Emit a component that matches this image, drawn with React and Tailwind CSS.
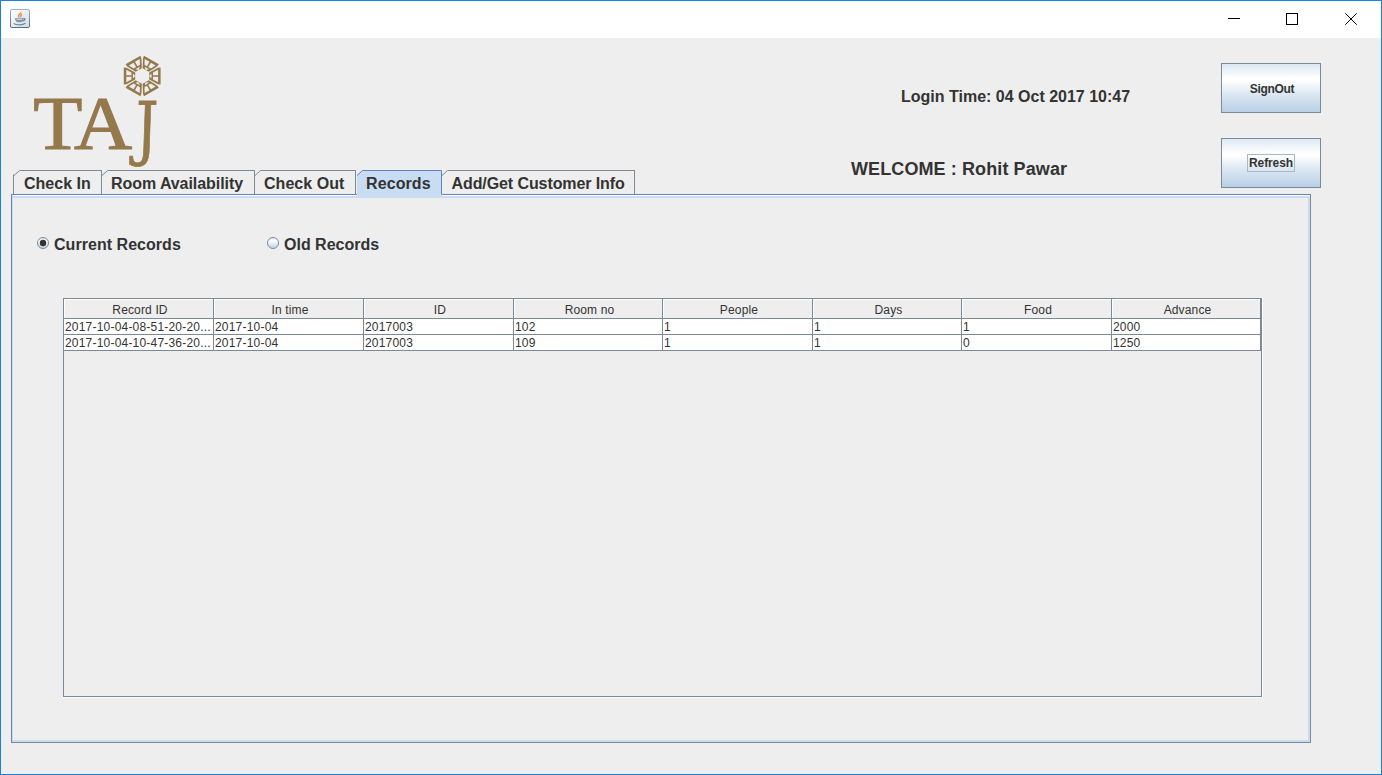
import React from "react";

const columns = [
  { name: "Record ID", w: "w-[150px]" },
  { name: "In time", w: "w-[150px]" },
  { name: "ID", w: "w-[150px]" },
  { name: "Room no", w: "w-[149px]" },
  { name: "People", w: "w-[150px]" },
  { name: "Days", w: "w-[149px]" },
  { name: "Food", w: "w-[150px]" },
  { name: "Advance", w: "w-[149px]" },
];

const rows = [
  ["2017-10-04-08-51-20-20...", "2017-10-04", "2017003", "102", "1", "1", "1", "2000"],
  ["2017-10-04-10-47-36-20...", "2017-10-04", "2017003", "109", "1", "1", "0", "1250"],
];

function JavaIcon() {
  return (
    <svg width="20" height="19" viewBox="0 0 20 19">
      <defs>
        <linearGradient id="cup" x1="0" y1="0" x2="1" y2="1">
          <stop offset="0" stopColor="#ffffff" />
          <stop offset="1" stopColor="#d3dae0" />
        </linearGradient>
        <linearGradient id="frame" x1="0" y1="0" x2="0" y2="1">
          <stop offset="0" stopColor="#9fb4c6" />
          <stop offset="1" stopColor="#536d84" />
        </linearGradient>
      </defs>
      <rect x="0.5" y="0.5" width="19" height="18" rx="1.5" fill="url(#cup)" stroke="url(#frame)" />
      <path d="M10.8 3.200c.6 2-4.200 2.400-1.600 5.200M12.200 5.400c-2.400 1-1.600 1.600-1.200 3" fill="none" stroke="#ee8d4a" strokeWidth="1.500" />
      <path d="M5 9h8.500c0 2-1 4-2.500 4.300H7.500C6 13 5 11 5 9z" fill="#7f97ae" />
      <path d="M6.500 10.200h5.500" stroke="#e4eaef" />
      <path d="M13.500 9.500c2.400-.2 1.600 2.200-1 2.500M3.500 14.500c3 1.800 9 1.800 12-.3" fill="none" stroke="#6c88a3" strokeWidth="1.300" />
    </svg>
  );
}

function TajLogo() {
  return (
    <svg width="134" height="116" viewBox="30 54 134 116" fill="#94794d" className="font-normal">
      <g transform="translate(142.200 76)">
        {[0, 60, 120, 180, 240, 300].map((a) => (
          <path
            key={a}
            transform={`rotate(${a})`}
            fillRule="evenodd"
            d="M-18.400-8.600L-15.800-8.200L-7-3.600V3.600L-15.800 8.200L-18.400 8.600ZM-15.900-6.300V-.8H-10.800V-3.600ZM-15.900 .8V6.300L-10.800 3.600V.8ZM-9.300-2.500V2.500L-7 0Z"
          />
        ))}
      </g>
      <text transform="translate(34 149.400) scale(1.060 1)" x="-0.700 37.700" fontSize="76" fontFamily="'Liberation Serif', serif" stroke="#94794d" strokeWidth="1.100">TA</text>
      <text transform="translate(134.500 151.500) skewX(-2) scale(.8 1)" fontSize="70" fontFamily="'DejaVu Serif', serif" stroke="#94794d" strokeWidth=".8">J</text>
    </svg>
  );
}

function Tab({ label, width, pad, track }) {
  return (
    <div className={`relative h-6 ${width}`}>
      <svg className="absolute inset-0 h-full w-full" fill="none" stroke="#7a8a99">
        <path d="M0 5.500L5.500 .5H400" />
      </svg>
      <span className={`relative block h-6 border-r border-[#7a8a99] leading-[27px] ${pad} ${track}`}>{label}</span>
    </div>
  );
}

function Radio({ label, on, track }) {
  return (
    <label className="flex w-[230px] items-center">
      <svg width="12" height="12" className="mr-[5px] -mt-[4px]">
        <defs>
          <linearGradient id="radio" x1="0" y1="0" x2="0" y2="1">
            <stop offset="0" stopColor="#dde8f3" />
            <stop offset=".3" stopColor="#fff" />
            <stop offset="1" stopColor="#b8cfe5" />
          </linearGradient>
        </defs>
        <circle cx="6" cy="6" r="5.500" fill="url(#radio)" stroke="#7a8a99" />
        {on && <circle cx="6" cy="6" r="3.200" fill="#333" />}
      </svg>
      <span className={track}>{label}</span>
    </label>
  );
}

const buttonStyle =
  "flex h-[50px] w-[100px] items-center justify-center border border-[#7a8a99] bg-[linear-gradient(180deg,#dde8f3_0%,#ffffff_30%,#ffffff_34%,#dde8f3_62%,#b8cfe5_100%)] text-[12px] font-bold";

export default function App() {
  return (
    <div className="flex h-[775px] w-[1382px] flex-col border border-[#1883d7] bg-[#eeeeee] font-['Liberation_Sans',sans-serif] text-[#333333]">
      <header className="flex h-[37px] shrink-0 justify-between bg-white">
        <div className="pt-2 pl-[9px]">
          <JavaIcon />
        </div>
        <svg className="mr-[19px]" width="140" height="37" viewBox="1222 1 140 37" stroke="#000" fill="none">
          <path d="M1228 18.500h12" />
          <rect x="1286.500" y="13.500" width="11" height="11" />
          <path d="M1345.300 13.300l11.400 11.400M1356.700 13.300l-11.400 11.400" />
        </svg>
      </header>

      <div className="flex h-[156px] shrink-0 font-bold">
        <div className="flex w-[850px] flex-col">
          <div className="h-[132px] pt-4 pl-[29px]">
            <TajLogo />
          </div>
          <nav className="flex pl-3 text-[16px] whitespace-nowrap">
            <div className="flex border-l border-[#7a8a99] [clip-path:polygon(5px_0,100%_0,100%_100%,0_100%,0_5px)]">
              <Tab label="Check In" width="w-[88px]" pad="pl-[10px]" track="" />
            </div>
            <Tab label="Room Availability" width="w-[153px]" pad="pl-[9px]" track="tracking-[-0.06px]" />
            <Tab label="Check Out" width="w-[101px]" pad="pl-[9px]" track="tracking-[0.04px]" />
            <div className="relative z-10 -mb-[3px] ml-px h-[27px] w-[85px]">
              <svg className="absolute inset-0 h-full w-full">
                <path d="M0 5L5 0H85V24H85V27H0Z" fill="#c8ddf2" />
                <path d="M0 5.500L5.500 .5H84.500V24.500" fill="none" stroke="#6382bf" />
              </svg>
              <span className="relative block pl-[9px] leading-[27px] tracking-[0.1px]">Records</span>
            </div>
            <Tab label="Add/Get Customer Info" width="w-[193px]" pad="pl-[9.500px]" track="tracking-[-0.09px]" />
          </nav>
        </div>
        <div className="flex w-[370px] flex-col whitespace-nowrap">
          <div className="pt-[47px] pl-[50px] text-[16px] leading-6">Login Time: 04 Oct 2017 10:47</div>
          <div className="pt-12 text-[18px] leading-6 tracking-[0.1px]">WELCOME : Rohit Pawar</div>
        </div>
        <div className="flex flex-col gap-[25px] pt-[25px]">
          <button className={buttonStyle}>
            <span className="pt-px pl-[2px] tracking-[-0.3px]">SignOut</span>
          </button>
          <button className={buttonStyle}>
            <span className="border border-[#a3b8cc] px-px leading-4 tracking-[-0.1px]">Refresh</span>
          </button>
        </div>
      </div>

      <main className="ml-[10px] h-[549px] w-[1300px] border border-t-[#6382bf] border-r-[#7a8a99] border-b-[#7a8a99] border-l-[#6382bf]">
        <div className="h-full border-t border-white">
          <div className="h-full border-2 border-l border-[#c8ddf2]">
            <div className="flex pt-[35px] pl-6 text-[16px] leading-6 font-bold">
              <Radio label="Current Records" on track="tracking-[0.04px]" />
              <Radio label="Old Records" track="" />
            </div>
            <div className="mt-[41px] ml-[50px] h-[400px] w-[1200px] border-r border-b border-white">
              <div className="h-[399px] border border-[#7a8a99] text-[12px]">
                <div className="flex h-5 w-[1197px] border-b border-[#7a8a99]">
                  {columns.map((c) => (
                    <div key={c.name} className={`h-[19px] shrink-0 border-r border-[#7a8a99] ${c.w}`}>
                      <div className="h-full border-t border-l border-white pl-[2px] text-center leading-5 tracking-[0.15px]">{c.name}</div>
                    </div>
                  ))}
                </div>
                {rows.map((r) => (
                  <div key={r[0]} className="flex h-4 w-[1197px] border-b border-[#7a8a99] bg-white">
                    {r.map((v, i) => (
                      <div key={i} className={`shrink-0 border-r border-[#7a8a99] pl-px leading-4 tracking-[0.2px] whitespace-nowrap ${columns[i].w}`}>{v}</div>
                    ))}
                  </div>
                ))}
              </div>
            </div>
          </div>
        </div>
      </main>
    </div>
  );
}
